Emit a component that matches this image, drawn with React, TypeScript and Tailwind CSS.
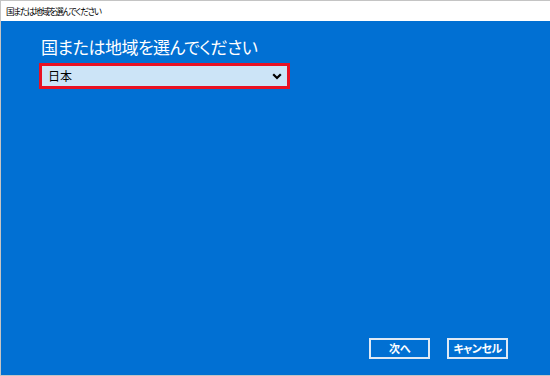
const jp = "font-['Noto_Sans_CJK_JP','Noto_Sans',sans-serif] [font-feature-settings:'palt']";

function Chevron() {
  return (
    <svg width="10" height="7" viewBox="0 0 10 7" className="block">
      <path d="M1.2 1.2 L5 5 L8.8 1.2" fill="none" stroke="#000" strokeWidth="2.2" />
    </svg>
  );
}

export default function App() {
  return (
    <div className={`flex h-[376px] w-[550px] flex-col border-y border-l border-[#c4c4c4] ${jp}`}>
      <div className="flex h-[20px] items-center bg-white pl-[5px] text-[8.6px] tracking-[-1.3px] text-black">
        国または地域を選んでください
      </div>

      <div className="flex flex-1 flex-col bg-[#0170d3] pl-[38px] pr-[42px] pt-[13px] pb-[16px]">
        <h1 className="pl-[2px] text-[17px] leading-[26px] font-normal tracking-[-0.5px] text-white">
          国または地域を選んでください
        </h1>

        <div className="mt-[3px] flex h-[26px] w-[251px] items-center justify-between border-[3px] border-[#e81123] bg-[#cce4f7] pl-[6px] pr-[5px]">
          <span className="text-[12px] leading-none text-black">日本</span>
          <Chevron />
        </div>

        <div className="mt-auto flex justify-end gap-[17px]">
          <button className="flex h-[21px] w-[61px] items-center justify-center border-2 border-[#dfe9f5] text-[11px] font-bold tracking-[-0.3px] text-white">
            次へ
          </button>
          <button className="flex h-[21px] w-[61px] items-center justify-center border-2 border-[#dfe9f5] text-[11px] font-bold tracking-[-0.5px] text-white">
            キャンセル
          </button>
        </div>
      </div>
    </div>
  );
}
